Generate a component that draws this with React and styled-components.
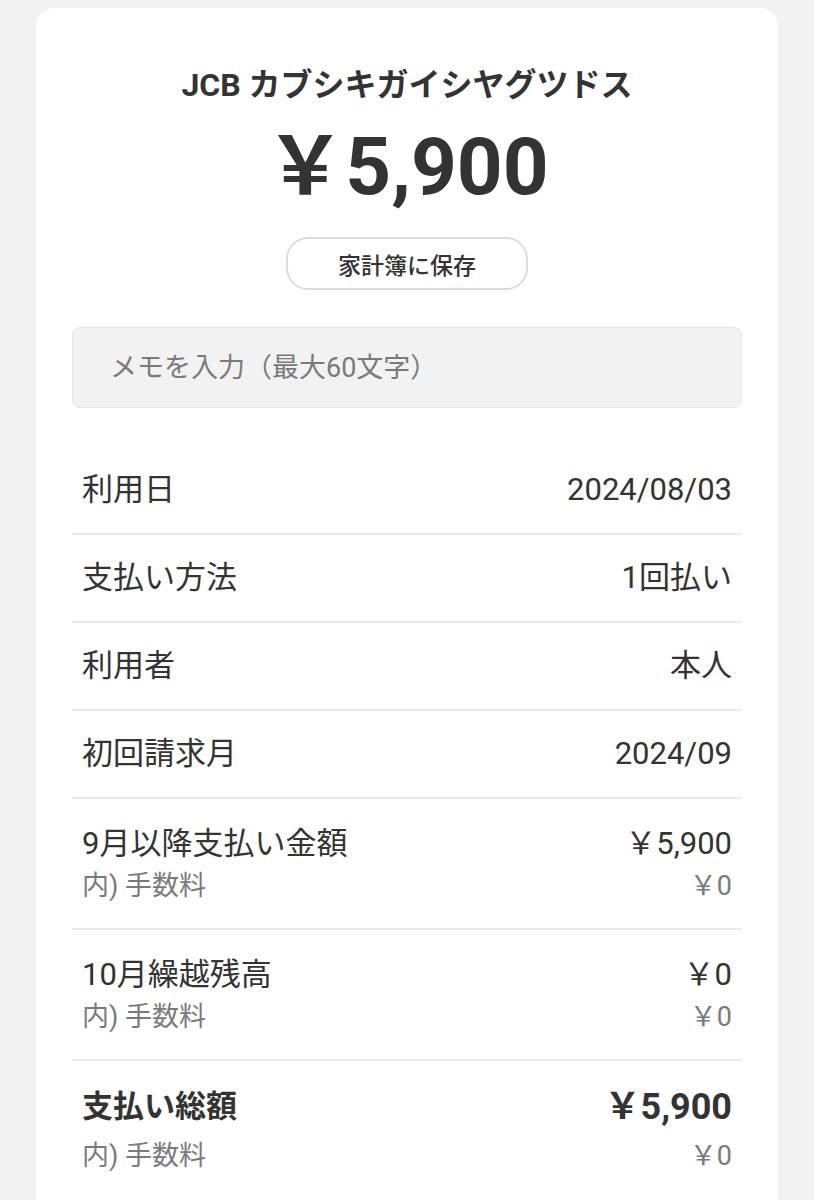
import React from "react";
import styled, { createGlobalStyle } from "styled-components";

const GlobalStyle = createGlobalStyle`
  html, body {
    margin: 0;
    padding: 0;
    background: #f2f2f2;
    font-family: Roboto, "Noto Sans CJK JP", sans-serif;
    color: #333;
  }
  * {
    box-sizing: border-box;
  }
`;

const details = [
  { id: 1, label: "利用日", value: "2024/08/03" },
  { id: 2, label: "支払い方法", value: "1回払い" },
  { id: 3, label: "利用者", value: "本人" },
  { id: 4, label: "初回請求月", value: "2024/09" },
  { id: 5, label: "9月以降支払い金額", value: "￥5,900", sub: "内) 手数料", subValue: "￥0" },
  { id: 6, label: "10月繰越残高", value: "￥0", sub: "内) 手数料", subValue: "￥0" },
];

const App = () => {
  return (
    <>
      <GlobalStyle />
      <Page>
        <Card>
          <Header>
            <Shop>JCB カブシキガイシヤグツドス</Shop>
            <Amount>￥5,900</Amount>
            <SaveButton type="button">家計簿に保存</SaveButton>
          </Header>
          <MemoInput type="text" placeholder="メモを入力（最大60文字）" />
          <DetailList>
            {details.map((v) => {
              return <DetailRow key={v.id} {...v} />;
            })}
            <DetailRow total label="支払い総額" value="￥5,900" sub="内) 手数料" subValue="￥0" />
          </DetailList>
        </Card>
      </Page>
    </>
  );
};

export default App;

const DetailRow = ({ label, value, sub, subValue, total }) => {
  return (
    <Row $multi={!!sub} $total={total}>
      <Line>
        <Label $total={total}>{label}</Label>
        <Value $total={total}>{value}</Value>
      </Line>
      {sub && (
        <SubLine $total={total}>
          <span>{sub}</span>
          <span>{subValue}</span>
        </SubLine>
      )}
    </Row>
  );
};

const Page = styled.main`
  padding: 8px 36px 0;
`;

const Card = styled.section`
  background: #fff;
  border-radius: 18px;
  padding: 57px 36px 40px;
`;

const Header = styled.div`
  display: flex;
  flex-direction: column;
  align-items: center;
`;

const Shop = styled.h1`
  margin: 0;
  font-size: 32px;
  line-height: 40px;
  font-weight: 700;
  color: #333;
`;

const Amount = styled.div`
  margin-top: 14px;
  font-size: 80px;
  line-height: 96px;
  font-weight: 700;
  color: #333;
`;

const SaveButton = styled.button`
  margin-top: 22px;
  width: 242px;
  height: 53px;
  background: #fff;
  border: 2px solid #dcdcdc;
  border-radius: 22px;
  font-family: inherit;
  font-size: 23px;
  font-weight: 500;
  color: #333;
  padding: 0;
`;

const MemoInput = styled.input`
  display: block;
  width: 100%;
  height: 81px;
  margin-top: 37px;
  padding: 0 37px;
  background: #f2f2f2;
  border: 1px solid #e6e6e6;
  border-radius: 8px;
  font-family: inherit;
  font-size: 27px;
  color: #333;
  outline: none;

  &::placeholder {
    color: #7a7a7a;
  }
`;

const DetailList = styled.ul`
  list-style: none;
  margin: 39px 0 0;
  padding: 0;
`;

const Row = styled.li`
  display: flex;
  flex-direction: column;
  justify-content: ${(p) => (p.$multi ? "flex-start" : "center")};
  min-height: ${(p) => (p.$multi ? "auto" : "88px")};
  padding: ${(p) => (p.$total ? "26px 10px 0" : p.$multi ? "25px 10px 22px" : "0 10px")};
  border-bottom: 2px solid #ebebeb;

  &:last-child {
    border-bottom: none;
  }
`;

const Line = styled.div`
  display: flex;
  justify-content: space-between;
  align-items: center;
  line-height: 40px;
  color: #333;
`;

const Label = styled.span`
  font-size: 31px;
  font-weight: ${(p) => (p.$total ? 700 : 400)};
`;

const Value = styled.span`
  font-size: ${(p) => (p.$total ? "36px" : "31px")};
  font-weight: ${(p) => (p.$total ? 700 : 400)};
`;

const SubLine = styled.div`
  display: flex;
  justify-content: space-between;
  align-items: center;
  margin-top: ${(p) => (p.$total ? "9px" : "2px")};
  line-height: 40px;
  font-size: 27px;
  color: #7a7a7a;
`;
